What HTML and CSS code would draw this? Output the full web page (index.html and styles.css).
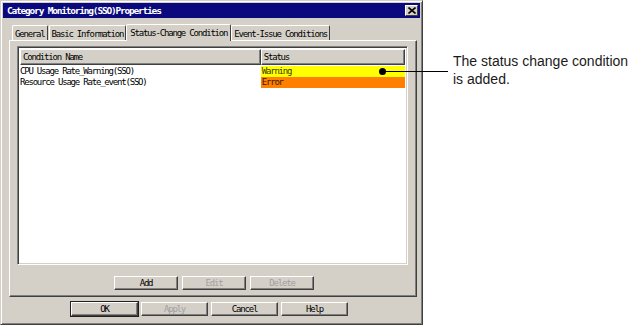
FILE: index.html
```html
<!DOCTYPE html>
<html lang="en">
<head>
    <meta charset="UTF-8">
    <title>Category Monitoring(SSO)Properties</title>
    <link rel="stylesheet" href="styles.css">
</head>
<body>
    <div class="page">
        <div class="dialog">
            <div class="titlebar">
                <span class="title">Category Monitoring(SSO)Properties</span>
                <span class="close">
                    <svg width="8" height="7" viewBox="0 0 8 7">
                        <path d="M0.5 0.5 L7.5 6.5 M7.5 0.5 L0.5 6.5" stroke="#000" stroke-width="1.6"/>
                    </svg>
                </span>
            </div>

            <div class="tabs">
                <div class="tab">General</div>
                <div class="tab">Basic Information</div>
                <div class="tab active">Status-Change Condition</div>
                <div class="tab">Event-Issue Conditions</div>
            </div>

            <div class="panel">
                <div class="listview">
                    <div class="lv-header">
                        <div class="lv-col col-name">Condition Name</div>
                        <div class="lv-col col-status">Status</div>
                    </div>
                    <div class="lv-row">
                        <div class="cell col-name">CPU Usage Rate_Warning(SSO)</div>
                        <div class="cell col-status warning">Warning</div>
                    </div>
                    <div class="lv-row">
                        <div class="cell col-name">Resource Usage Rate_event(SSO)</div>
                        <div class="cell col-status error">Error</div>
                    </div>
                </div>
                <div class="panel-buttons">
                    <button class="btn">Add</button>
                    <button class="btn" disabled>Edit</button>
                    <button class="btn" disabled>Delete</button>
                </div>
            </div>

            <div class="dialog-buttons">
                <button class="btn default">OK</button>
                <button class="btn" disabled>Apply</button>
                <button class="btn">Cancel</button>
                <button class="btn">Help</button>
            </div>
        </div>

        <div class="note">The status change condition<br>is added.</div>

        <!-- callout pointing at the Warning row -->
        <div class="callout"><span class="dot"></span></div>
    </div>
</body>
</html>
```

FILE: styles.css
```css
body {
    margin: 0;
    background: #fff;
}
.page {
    position: relative;
    display: flex;
    align-items: flex-start;
    width: 639px;
    height: 328px;
}
.dialog {
    box-sizing: border-box;
    width: 423px;
    height: 325px;
    background: #d4d0c8;
    border: 1px solid;
    border-color: #d4d0c8 #404040 #404040 #d4d0c8;
    box-shadow: inset 1px 1px #fff, inset -1px -1px #808080;
    padding: 2px;
    font-family: "DejaVu Sans Mono", "Liberation Mono", monospace;
    font-size: 9px;
    letter-spacing: -1.2px;
    color: #000;
}
.titlebar {
    height: 15px;
    background: #0a0a7e;
    display: flex;
    align-items: center;
    justify-content: space-between;
    padding: 0 2px 0 4px;
}
.title {
    color: #fff;
    font-weight: bold;
    font-size: 9.5px;
    letter-spacing: -1.2px;
}
.close {
    box-sizing: border-box;
    width: 13px;
    height: 11px;
    background: #d4d0c8;
    border: 1px solid;
    border-color: #fff #404040 #404040 #fff;
    display: flex;
    align-items: center;
    justify-content: center;
}
.tabs {
    display: flex;
    align-items: flex-end;
    height: 22px;
    margin: 0 0 0 9px;
}
.tab {
    box-sizing: border-box;
    height: 15px;
    padding: 2px 2px 0 2px;
    border: 1px solid;
    border-bottom: none;
    border-color: #fff #404040 transparent #fff;
    border-radius: 2px 2px 0 0;
    margin-right: 1px;
    line-height: 12px;
}
.tab.active {
    height: 17px;
    padding-top: 2px;
    margin: 0 0 -1px -1px;
    padding-left: 3px;
    padding-right: 3px;
    background: #d4d0c8;
    position: relative;
    z-index: 1;
}
.panel {
    box-sizing: border-box;
    width: 408px;
    height: 257px;
    margin-left: 6px;
    border: 1px solid;
    border-color: #fff #404040 #404040 #fff;
    box-shadow: inset -1px -1px #808080;
    padding: 5px 0 0 7px;
}
.listview {
    box-sizing: border-box;
    width: 391px;
    height: 219px;
    background: #fff;
    border: 1px solid;
    border-color: #808080 #fff #fff #808080;
    box-shadow: inset 1px 1px #404040, inset -1px -1px #d4d0c8;
    padding: 2px;
}
.lv-header {
    display: flex;
    height: 16px;
}
.lv-col {
    box-sizing: border-box;
    background: #d4d0c8;
    border: 1px solid;
    border-color: #fff #404040 #404040 #fff;
    box-shadow: inset -1px -1px #808080;
    padding: 2px 0 0 2px;
}
.col-name {
    width: 242px;
}
.col-status {
    width: 145px;
}
.lv-row {
    display: flex;
    height: 11px;
    line-height: 11px;
}
.lv-header + .lv-row {
    margin-top: 1px;
}
.cell {
    white-space: nowrap;
}
.cell.col-status {
    padding-left: 1px;
    width: 144px;
}
.warning {
    background: #ffff00;
    color: #3a3a00;
}
.error {
    background: #ff8000;
    color: #3a1a00;
}
.btn {
    box-sizing: border-box;
    width: 64px;
    height: 14px;
    padding: 0;
    background: #d4d0c8;
    border: 1px solid;
    border-color: #fff #404040 #404040 #fff;
    box-shadow: inset -1px -1px #808080;
    font: inherit;
    letter-spacing: inherit;
    color: #000;
    line-height: 11px;
}
.btn:disabled {
    color: #a0a0a0;
}
.btn.default {
    outline: 1px solid #202020;
    outline-offset: 0;
}
.panel-buttons {
    display: flex;
    justify-content: center;
    gap: 4px;
    margin: 11px 0 0 -5px;
}
.dialog-buttons {
    display: flex;
    justify-content: center;
    gap: 3px;
    margin: 5px 0 0 -4px;
}
.dialog-buttons .btn {
    width: 67px;
    height: 14px;
}
.note {
    margin: 52px 0 0 30px;
    font-family: "Liberation Sans", Arial, sans-serif;
    font-size: 14px;
    line-height: 18px;
    color: #1a1a1a;
}
.callout {
    position: absolute;
    left: 382px;
    top: 71px;
    width: 66px;
    height: 1px;
    background: #000;
}
.dot {
    position: absolute;
    left: -3px;
    top: -3px;
    width: 7px;
    height: 7px;
    border-radius: 50%;
    background: #000;
}
```
